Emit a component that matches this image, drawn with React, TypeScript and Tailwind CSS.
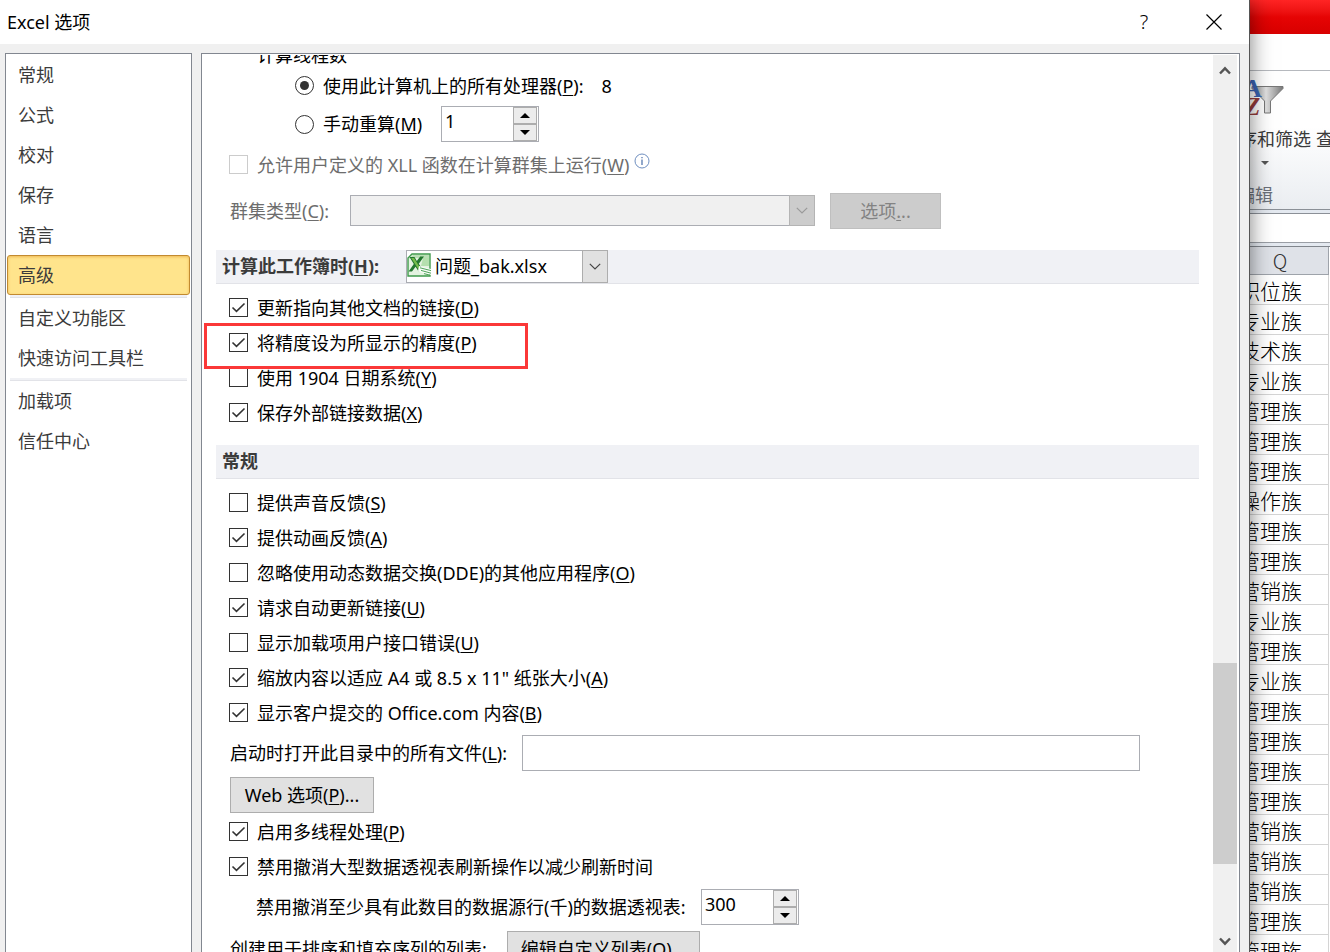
import React, { useId, useState } from "react";

const uiFont = "font-['Noto_Sans','Noto_Sans_CJK_SC',sans-serif]";

function Key({ k }: { k: string }) {
  return (
    <>
      (<span className="underline decoration-1 underline-offset-2">{k}</span>)
    </>
  );
}

function CheckRow({
  text,
  k,
  checked = false,
  disabled = false,
  children,
}: {
  text: string;
  k?: string;
  checked?: boolean;
  disabled?: boolean;
  children?: React.ReactNode;
}) {
  const id = useId();
  const [on, setOn] = useState(checked);
  return (
    <div className="relative flex h-[35px] items-center pl-[13px]">
      <span className="grid size-[19px] shrink-0">
        <input
          id={id}
          type="checkbox"
          checked={on}
          disabled={disabled}
          onChange={() => setOn(!on)}
          className="col-start-1 row-start-1 size-[19px] appearance-none border border-[#333] bg-white disabled:border-[#ccc]"
        />
        {on && (
          <svg viewBox="0 0 19 19" className="pointer-events-none col-start-1 row-start-1 size-[19px]" fill="none" stroke="#333" strokeWidth="1.6">
            <path d="M3.5 9.5 L7.5 13.3 L15.5 5.5" />
          </svg>
        )}
      </span>
      <label htmlFor={id} className={disabled ? "pl-[9px] whitespace-nowrap text-[#6d6d6d]" : "pl-[9px] whitespace-nowrap"}>
        {text}
        {k && <Key k={k} />}
      </label>
      {children}
    </div>
  );
}

function Spinner({ id, value }: { id: string; value: string }) {
  const [v, setV] = useState(value);
  const btn = "flex h-[17px] w-6 items-center justify-center border border-[#adadad] bg-[#ececec]";
  return (
    <div className="flex h-9 w-[98px] shrink-0 border border-[#abadb3] bg-white">
      <input id={id} value={v} onChange={(e) => setV(e.target.value)} className="h-7 w-[71px] bg-transparent pl-[3px] outline-none" />
      <div className="flex flex-col">
        <button aria-label="增加" className={btn} onClick={() => setV(String(Number(v) + 1))}>
          <svg viewBox="0 0 10 5" className="h-[5px] w-[10px]"><path d="M5 0 L10 5 H0 Z" /></svg>
        </button>
        <button aria-label="减少" className={btn} onClick={() => setV(String(Number(v) - 1))}>
          <svg viewBox="0 0 10 5" className="h-[5px] w-[10px]"><path d="M0 0 H10 L5 5 Z" /></svg>
        </button>
      </div>
    </div>
  );
}

function Radio({ id, checked = false }: { id: string; checked?: boolean }) {
  return (
    <span className="grid size-[19px] shrink-0 place-items-center">
      <input id={id} type="radio" name="threads" defaultChecked={checked} className="peer col-start-1 row-start-1 size-[19px] appearance-none rounded-full border border-[#333] bg-white" />
      <span className="pointer-events-none col-start-1 row-start-1 hidden size-[9px] rounded-full bg-[#333] peer-checked:block" />
    </span>
  );
}

function Chevron({ color }: { color: string }) {
  return (
    <svg viewBox="0 0 12 7" className="h-[7px] w-3" fill="none" stroke={color} strokeWidth="1.2">
      <path d="M0.8 0.8 L6 6 L11.2 0.8" />
    </svg>
  );
}

function ExcelIcon() {
  return (
    <svg viewBox="0 0 24 24" className="size-6">
      <path d="M5 1 H23 V23 H1 V5 Z" fill="#e4f3e1" stroke="#3f9a4c" strokeWidth="1.4" />
      <path d="M2 6 L6 2 H22 V5 H2 Z" fill="#b9dfb4" />
      <path d="M16 5 H22 V13 H14 Z" fill="#b5dfae" />
      <path d="M2.5 4 H7.5 L9.8 8 L13.2 3.5 H17 L11.8 10.7 L17 18.5 H11.6 L8.6 13.8 L5 18.5 H1.6 L6.8 11 Z" fill="#23772f" />
      <path d="M4.2 5 H7 L14.8 17.4 H12.2 Z" fill="#76bd4b" />
      <path d="M12 13 L24 16 V22 L11 18.5 Z" fill="#f8fcf7" />
      <path d="M13 14.8 L24 17.6 M14 17.4 L24 20.2 M17 20.6 L23 22.2" stroke="#4fa45a" strokeWidth="1" />
    </svg>
  );
}

function Nav() {
  const groups = [
    ["常规", "公式", "校对", "保存", "语言", "高级"],
    ["自定义功能区", "快速访问工具栏"],
    ["加载项", "信任中心"],
  ];
  return (
    <nav className="w-[187px] shrink-0 border border-b-0 border-[#828790] bg-white px-px pt-px text-[#3b3b3b]">
      {groups.map((g, i) => (
        <div key={i}>
          {i > 0 && <div className="mx-[3px] h-[3px] border-b border-[#e2e3e8] bg-[#f0f1f5]" />}
          {g.map((t) => (
            <button
              key={t}
              className={
                t === "高级"
                  ? "block h-10 w-full rounded-[3px] border border-[#c28a30] bg-[#ffe48c] pl-[10px] text-left shadow-[inset_0_1px_3px_#efb955]"
                  : "block h-10 w-full pl-[11px] text-left"
              }
            >
              {t}
            </button>
          ))}
        </div>
      ))}
    </nav>
  );
}

function ScrollBar() {
  return (
    <div className="mr-0.5 flex w-6 shrink-0 flex-col bg-[#f0f0f0]">
      <button aria-label="向上滚动" className="flex h-[30px] items-center justify-center">
        <svg viewBox="0 0 12 9" className="h-[9px] w-3" fill="none" stroke="#555" strokeWidth="2.4"><path d="M1 7.5 L6 2.3 L11 7.5" /></svg>
      </button>
      <div className="flex-[578]" />
      <div className="flex-[201] bg-[#cdcdcd]" />
      <div className="flex-[66]" />
      <button aria-label="向下滚动" className="flex h-[22px] items-center justify-center">
        <svg viewBox="0 0 12 9" className="h-[9px] w-3" fill="none" stroke="#555" strokeWidth="2.4"><path d="M1 1.5 L6 6.7 L11 1.5" /></svg>
      </button>
    </div>
  );
}

function Options() {
  const band = "flex h-[34px] items-center border-b border-[#e2e3e8] bg-[#f0f1f5] pl-1.5 pb-px font-bold text-[#3b3b3b]";
  const button = "h-9 shrink-0 border border-[#adadad] bg-[#e1e1e1] whitespace-nowrap";
  return (
    <div className="min-w-0 flex-1 overflow-hidden px-[14px]">
      <div className="-mt-[13px] flex h-[26px] items-center pl-[41px]">计算线程数</div>
      <div className="flex h-[35px] items-center pl-[79px]">
        <Radio id="all" checked />
        <label htmlFor="all" className="pl-[9px]">使用此计算机上的所有处理器<Key k="P" />:</label>
        <span className="pl-[18px]">8</span>
      </div>
      <div className="mt-[3px] flex h-9 items-center pl-[79px]">
        <Radio id="manual" />
        <label htmlFor="manual" className="w-[127px] pl-[9px]">手动重算<Key k="M" /></label>
        <Spinner id="threadCount" value="1" />
      </div>
      <div className="mt-[5px]">
        <CheckRow text="允许用户定义的 XLL 函数在计算群集上运行" k="W" disabled>
          <svg viewBox="0 0 16 16" className="mb-2 ml-[5px] size-4" fill="none" stroke="#6f8fc0">
            <circle cx="8" cy="8" r="7" />
            <path d="M8 6.5 V12 M8 4 V5.3" stroke="#4a6ea8" strokeWidth="1.2" />
          </svg>
        </CheckRow>
      </div>
      <div className="mt-[11px] flex h-9 items-center pl-[14px] text-[#6d6d6d]">
        <label htmlFor="cluster" className="w-[120px]">群集类型<Key k="C" />:</label>
        <div className="mb-px grid h-[31px] w-[465px]">
          <select id="cluster" disabled className="col-start-1 row-start-1 appearance-none border border-[#abadb3] bg-[#f0f0f0]" />
          <span className="pointer-events-none col-start-1 row-start-1 flex w-[26px] items-center justify-center justify-self-end border border-[#b4b4b4] bg-[#ccc]">
            <Chevron color="#999" />
          </span>
        </div>
        <button disabled className="ml-[15px] h-9 w-[111px] border border-[#bfbfbf] bg-[#ccc] text-[#838383]">
          选项<span className="underline decoration-1 underline-offset-2">.</span>..
        </button>
      </div>

      <div className={`mt-[21px] ${band}`}>
        <label htmlFor="book" className="w-[184px]">计算此工作簿时<Key k="H" />:</label>
        <div className="grid h-[33px] w-[202px] font-normal text-black">
          <select id="book" className="col-start-1 row-start-1 appearance-none border border-[#abadb3] bg-white pb-px pl-7">
            <option>问题_bak.xlsx</option>
          </select>
          <span className="pointer-events-none col-start-1 row-start-1 self-center justify-self-start pb-0.5 pl-px"><ExcelIcon /></span>
          <span className="pointer-events-none col-start-1 row-start-1 flex w-[26px] items-center justify-center justify-self-end border border-[#adadad] bg-[#e1e1e1]">
            <Chevron color="#444" />
          </span>
        </div>
      </div>
      <div className="mt-1.5">
        <CheckRow text="更新指向其他文档的链接" k="D" checked />
        <CheckRow text="将精度设为所显示的精度" k="P" checked>
          <span className="pointer-events-none absolute -top-0.5 -left-3 z-10 h-[46px] w-[324px] border-3 border-[#fb3838]" />
        </CheckRow>
        <CheckRow text="使用 1904 日期系统" k="Y" />
        <CheckRow text="保存外部链接数据" k="X" checked />
      </div>

      <h2 className={`mt-[15px] ${band}`}>常规</h2>
      <div className="mt-1.5">
        <CheckRow text="提供声音反馈" k="S" />
        <CheckRow text="提供动画反馈" k="A" checked />
        <CheckRow text="忽略使用动态数据交换(DDE)的其他应用程序" k="O" />
        <CheckRow text="请求自动更新链接" k="U" checked />
        <CheckRow text="显示加载项用户接口错误" k="U" />
        <CheckRow text={'缩放内容以适应 A4 或 8.5 x 11" 纸张大小'} k="A" checked />
        <CheckRow text="显示客户提交的 Office.com 内容" k="B" checked />
      </div>
      <div className="mt-[5px] mr-[59px] flex h-9 items-center pl-[14px]">
        <label htmlFor="dir" className="w-[292px] shrink-0">启动时打开此目录中的所有文件<Key k="L" />:</label>
        <input id="dir" className="h-9 min-w-0 flex-1 border border-[#abadb3] bg-white px-1" />
      </div>
      <div className="mt-1.5 flex pl-[14px]">
        <button className={`w-[144px] ${button}`}>Web 选项<Key k="P" />...</button>
      </div>
      <div className="mt-px">
        <CheckRow text="启用多线程处理" k="P" checked />
        <CheckRow text="禁用撤消大型数据透视表刷新操作以减少刷新时间" checked />
      </div>
      <div className="mt-[5px] flex h-9 items-center pl-10">
        <label htmlFor="rows" className="w-[445px] shrink-0">禁用撤消至少具有此数目的数据源行(千)的数据透视表:</label>
        <Spinner id="rows" value="300" />
      </div>
      <div className="mt-1.5 flex h-9 items-center pl-[14px]">
        <span className="w-[277px] shrink-0">创建用于排序和填充序列的列表:</span>
        <button className={`w-[193px] ${button}`}>编辑自定义列表<Key k="O" />...</button>
      </div>
    </div>
  );
}

function SortFilterIcon() {
  return (
    <svg viewBox="0 0 46 42" className="h-[42px] w-[46px]">
      <defs>
        <linearGradient id="funnel" x1="0" x2="1">
          <stop offset="0" stopColor="#8a8a8a" />
          <stop offset="0.45" stopColor="#e2e2e2" />
          <stop offset="1" stopColor="#777" />
        </linearGradient>
      </defs>
      <path d="M14 9.5 H45 V11.5 L32.5 24 V36 H26.5 V24 L14 11.5 Z" fill="url(#funnel)" stroke="#777" strokeWidth="1" />
      <text x="5" y="20" fontSize="26" fontWeight="700" fontFamily="Liberation Serif" fill="#3a63b4">A</text>
      <text x="7" y="38" fontSize="25" fontWeight="700" fontStyle="italic" fontFamily="Liberation Serif" fill="#963c3c">Z</text>
    </svg>
  );
}

function Sheet() {
  const kinds = "职位 专业 技术 专业 管理 管理 管理 操作 管理 管理 营销 专业 管理 专业 管理 管理 管理 管理 营销 营销 营销 管理 管理".split(" ");
  return (
    <aside className="flex w-[81px] shrink-0 flex-col overflow-hidden bg-white">
      <div className="h-[34px] shrink-0 bg-linear-to-b from-[#ff2424] via-[#e60404] to-[#d80000]" />
      <div className="h-[37px] shrink-0 border-b border-[#b6b9be]" />
      <div className="flex h-[139px] shrink-0 flex-col items-end border-b border-[#8b9097] bg-linear-to-b from-white from-40% to-[#eaedf1] text-[#3b3b3b]">
        <div className="mt-[6px] mr-[46px]"><SortFilterIcon /></div>
        <div className="mt-[6px] flex h-7 items-center gap-[5px] whitespace-nowrap">
          <span>排序和筛选</span>
          <span className="w-[14px] overflow-hidden">查找</span>
        </div>
        <svg viewBox="0 0 8 4" className="mt-2 mr-[61px] h-1 w-2"><path d="M0 0 H8 L4 4 Z" fill="#555" /></svg>
        <span className="mt-[18px] mr-[57px] whitespace-nowrap text-[#6b7079]">编辑</span>
      </div>
      <div className="h-1 shrink-0 border-b border-[#8b9097] bg-[#e4e9f0]" />
      <div className="h-[29px] shrink-0 border-b border-[#9a9ea5] bg-white" />
      <div className="h-1 shrink-0 border-b border-[#80858c] bg-[#e4e9f0]" />
      <table className="w-20 shrink-0 table-fixed border-separate border-spacing-0 font-['Noto_Sans_CJK_SC',sans-serif] text-[21px] leading-7 font-light text-black">
        <thead>
          <tr>
            <th className="h-7 border-r border-b border-[#9ea3aa] bg-[#dfe2e8] p-0 pr-[17px] text-center text-[20px] leading-[27px] font-light text-[#333]">Q</th>
          </tr>
        </thead>
        <tbody>
          {kinds.map((k, i) => (
            <tr key={i}>
              <td className="h-[30px] border-r border-b border-[#d4d4d4] p-0">
                <div className="flex h-[29px] items-center justify-end pr-[26px] whitespace-nowrap">{k}族</div>
              </td>
            </tr>
          ))}
        </tbody>
      </table>
    </aside>
  );
}

export default function App() {
  return (
    <div className={`flex h-screen overflow-hidden bg-white text-[18px] leading-6 text-black ${uiFont}`}>
      <section role="dialog" aria-label="Excel 选项" className="relative z-10 flex min-w-0 flex-1 flex-col bg-[#f0f0f0] shadow-[1px_0_0_#555,0_0_22px_rgba(0,0,0,0.55)]">
        <header className="flex h-11 shrink-0 items-center bg-white pb-px pl-[7px]">
          <h1 className="flex-1">Excel 选项</h1>
          <button aria-label="帮助" className="w-[70px] text-center text-[20px] font-light">?</button>
          <button aria-label="关闭" className="flex w-[70px] justify-center">
            <svg viewBox="0 0 16 16" className="size-4" fill="none" stroke="#000" strokeWidth="1.2"><path d="M0.5 0.5 L15.5 15.5 M15.5 0.5 L0.5 15.5" /></svg>
          </button>
        </header>
        <div className="flex min-h-0 flex-1 gap-[9px] pt-[9px] pr-[9px] pl-[5px]">
          <Nav />
          <main className="flex min-w-0 flex-1 border border-b-0 border-[#828790] bg-white pt-px">
            <Options />
            <ScrollBar />
          </main>
        </div>
      </section>
      <Sheet />
    </div>
  );
}
